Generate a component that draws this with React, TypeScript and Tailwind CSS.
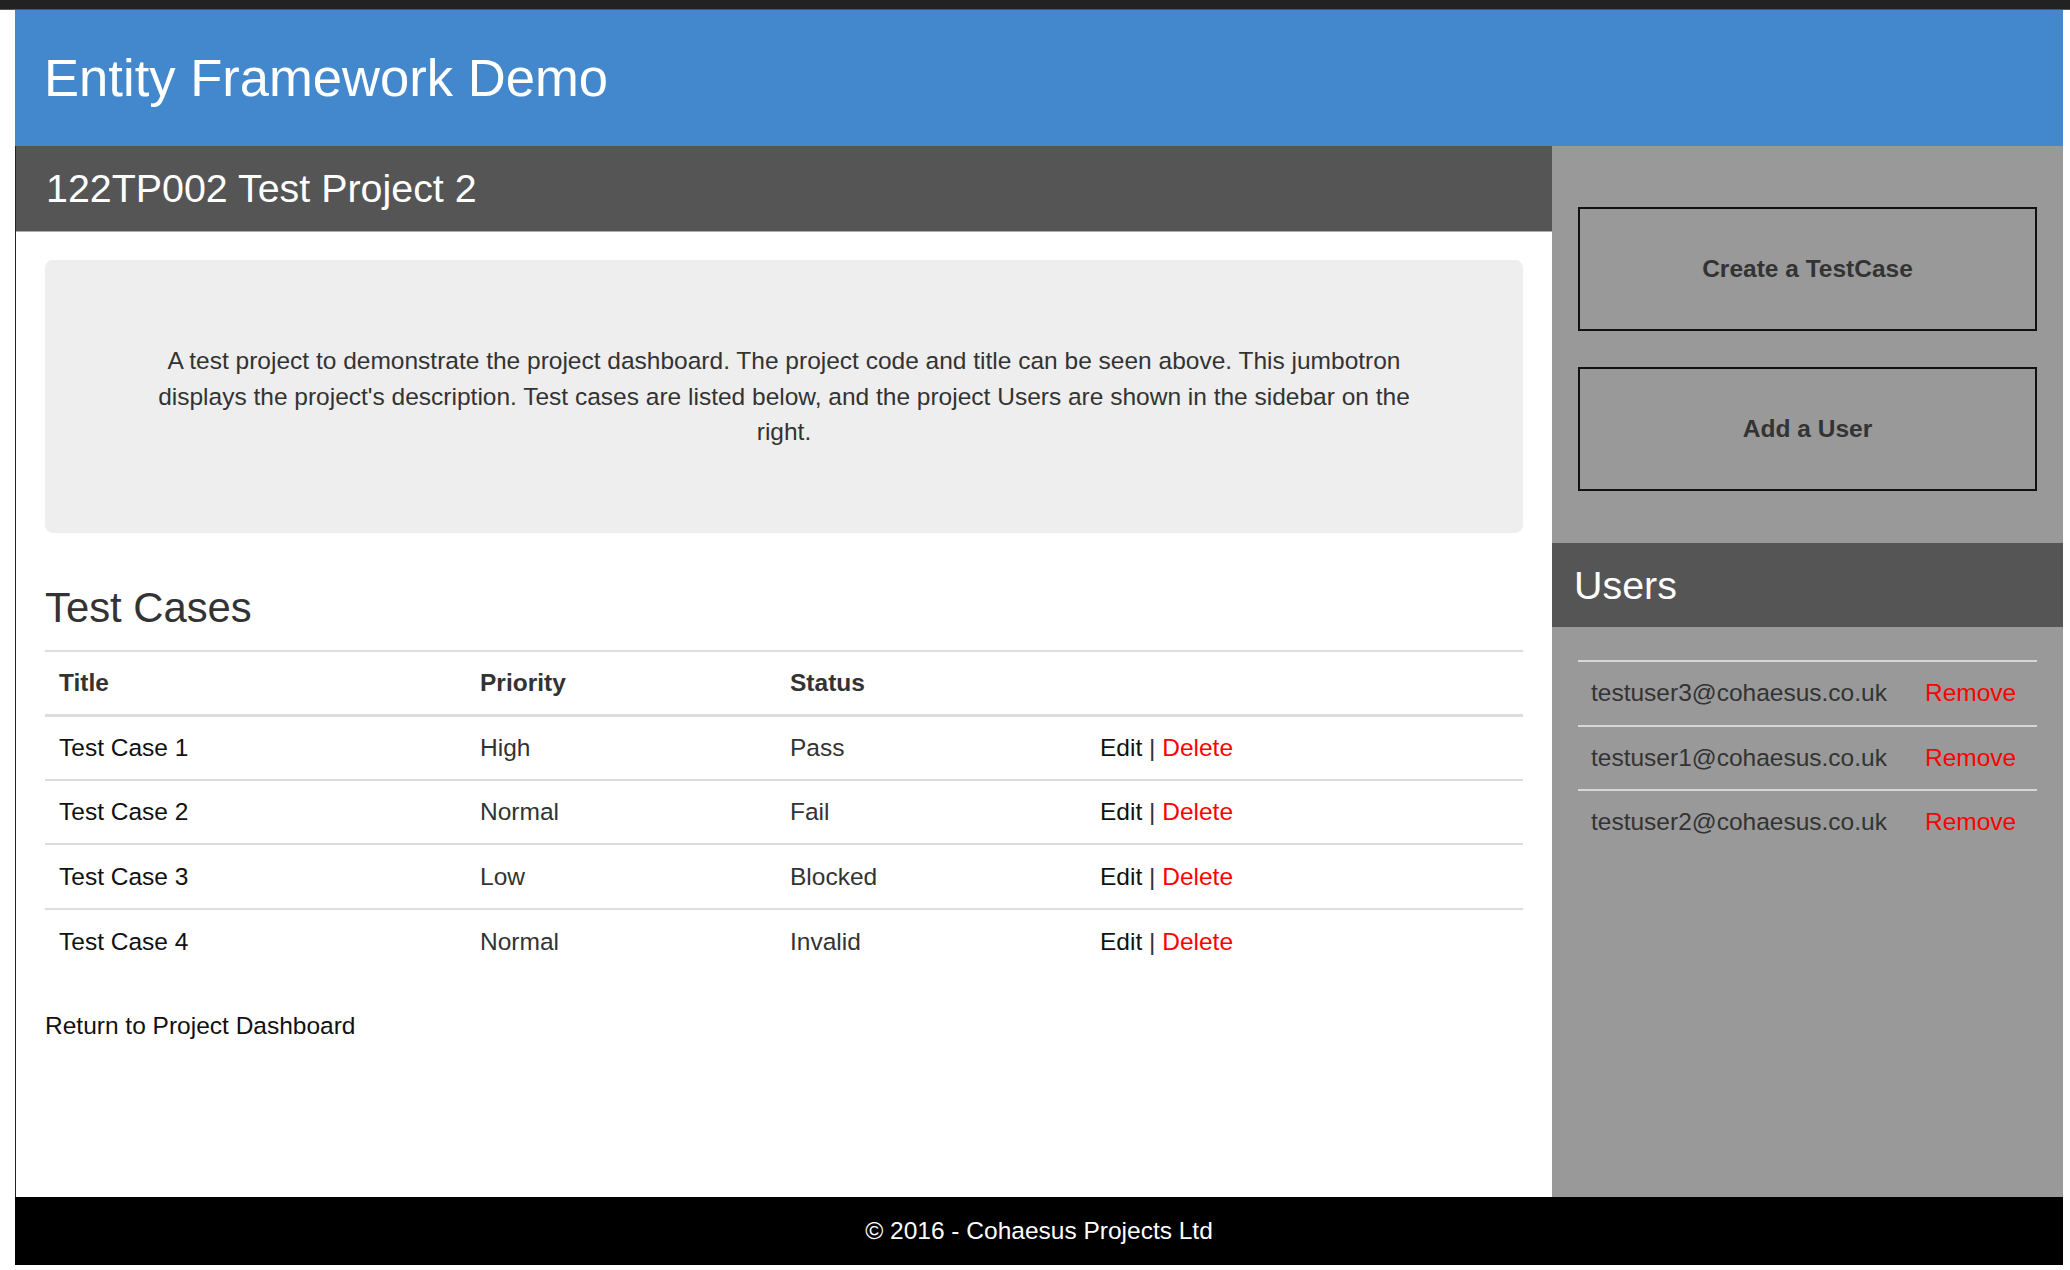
import React from 'react';

const testCases = [
  { title: 'Test Case 1', priority: 'High', status: 'Pass' },
  { title: 'Test Case 2', priority: 'Normal', status: 'Fail' },
  { title: 'Test Case 3', priority: 'Low', status: 'Blocked' },
  { title: 'Test Case 4', priority: 'Normal', status: 'Invalid' },
];

const users = ['testuser3@cohaesus.co.uk', 'testuser1@cohaesus.co.uk', 'testuser2@cohaesus.co.uk'];

export default function App() {
  return (
    <div className="w-[2070px] h-[1270px] bg-white font-['Liberation_Sans',Arial,sans-serif] text-[24.5px] leading-[36px] text-[#333] overflow-hidden">
      {/* browser chrome strip */}
      <div className="h-[9px] bg-[#222]" />
      <div className="h-[1px] bg-[#555]" />

      <div className="ml-[15px] w-[2048px]">
        {/* Site header */}
        <header className="h-[136px] bg-[#4388cd] flex items-center pl-[29px]">
          <h1 className="text-[52.6px] leading-[60px] text-white">Entity Framework Demo</h1>
        </header>

        <div className="flex h-[1051px]">
          {/* Main column */}
          <main className="w-[1537px] border-l border-[#222] flex flex-col">
            <div className="h-[86px] bg-[#555] border-b border-[#aaa] flex items-center pl-[30px] pb-[2px]">
              <h2 className="text-[39.4px] leading-[44px] text-white">122TP002 Test Project 2</h2>
            </div>

            <div className="px-[29px]">
              <div className="mt-[28px] h-[273px] bg-[#eee] rounded-[8px] px-[92px] flex items-center justify-center">
                <p className="text-center leading-[35.5px] text-[#333]">
                  A test project to demonstrate the project dashboard. The project code and title can be seen above. This jumbotron displays the project's description. Test cases are listed below, and the project Users are shown in the sidebar on the right.
                </p>
              </div>

              <h3 className="mt-[53px] text-[41.8px] leading-[44px] text-[#333]">Test Cases</h3>

              <table className="mt-[20px] w-full border-collapse text-left">
                <thead>
                  <tr className="border-t-2 border-b-[3px] border-[#ddd] h-[64px]">
                    <th className="w-[421px] px-[14px] font-bold">Title</th>
                    <th className="w-[310px] px-[14px] font-bold">Priority</th>
                    <th className="w-[310px] px-[14px] font-bold">Status</th>
                    <th className="px-[14px]" />
                  </tr>
                </thead>
                <tbody>
                  {testCases.map((tc, i) => (
                    <tr key={tc.title} className={`h-[64.7px] ${i > 0 ? 'border-t-2 border-[#ddd]' : ''}`}>
                      <td className="px-[14px] text-[#111]">{tc.title}</td>
                      <td className="px-[14px]">{tc.priority}</td>
                      <td className="px-[14px]">{tc.status}</td>
                      <td className="px-[14px]">
                        <a className="text-[#111]">Edit</a> | <a className="text-[#ff0000]">Delete</a>
                      </td>
                    </tr>
                  ))}
                </tbody>
              </table>

              <a className="block mt-[34px] text-[#111]">Return to Project Dashboard</a>
            </div>
          </main>

          {/* Sidebar */}
          <aside className="w-[511px] bg-[#999] flex flex-col pt-[61px]">
            <div className="px-[26px] flex flex-col gap-[36px]">
              <button className="h-[124px] border-2 border-[#111] font-bold text-[#333]">Create a TestCase</button>
              <button className="h-[124px] border-2 border-[#111] font-bold text-[#333]">Add a User</button>
            </div>

            <div className="mt-[52px] h-[84px] bg-[#555] flex items-center pl-[22px]">
              <h2 className="text-[39.4px] leading-[44px] text-white">Users</h2>
            </div>

            <div className="mt-[33px] mx-[26px]">
              {users.map((u) => (
                <div key={u} className="grid grid-cols-[334px_1fr] h-[64.5px] items-center border-t-2 border-[#d6d6d6]">
                  <span className="pl-[13px] text-[#333]">{u}</span>
                  <span className="pl-[13px] text-[#ff0000]">Remove</span>
                </div>
              ))}
            </div>
          </aside>
        </div>

        <footer className="h-[68px] bg-black flex items-center justify-center text-white">
          © 2016 - Cohaesus Projects Ltd
        </footer>
      </div>
    </div>
  );
}
